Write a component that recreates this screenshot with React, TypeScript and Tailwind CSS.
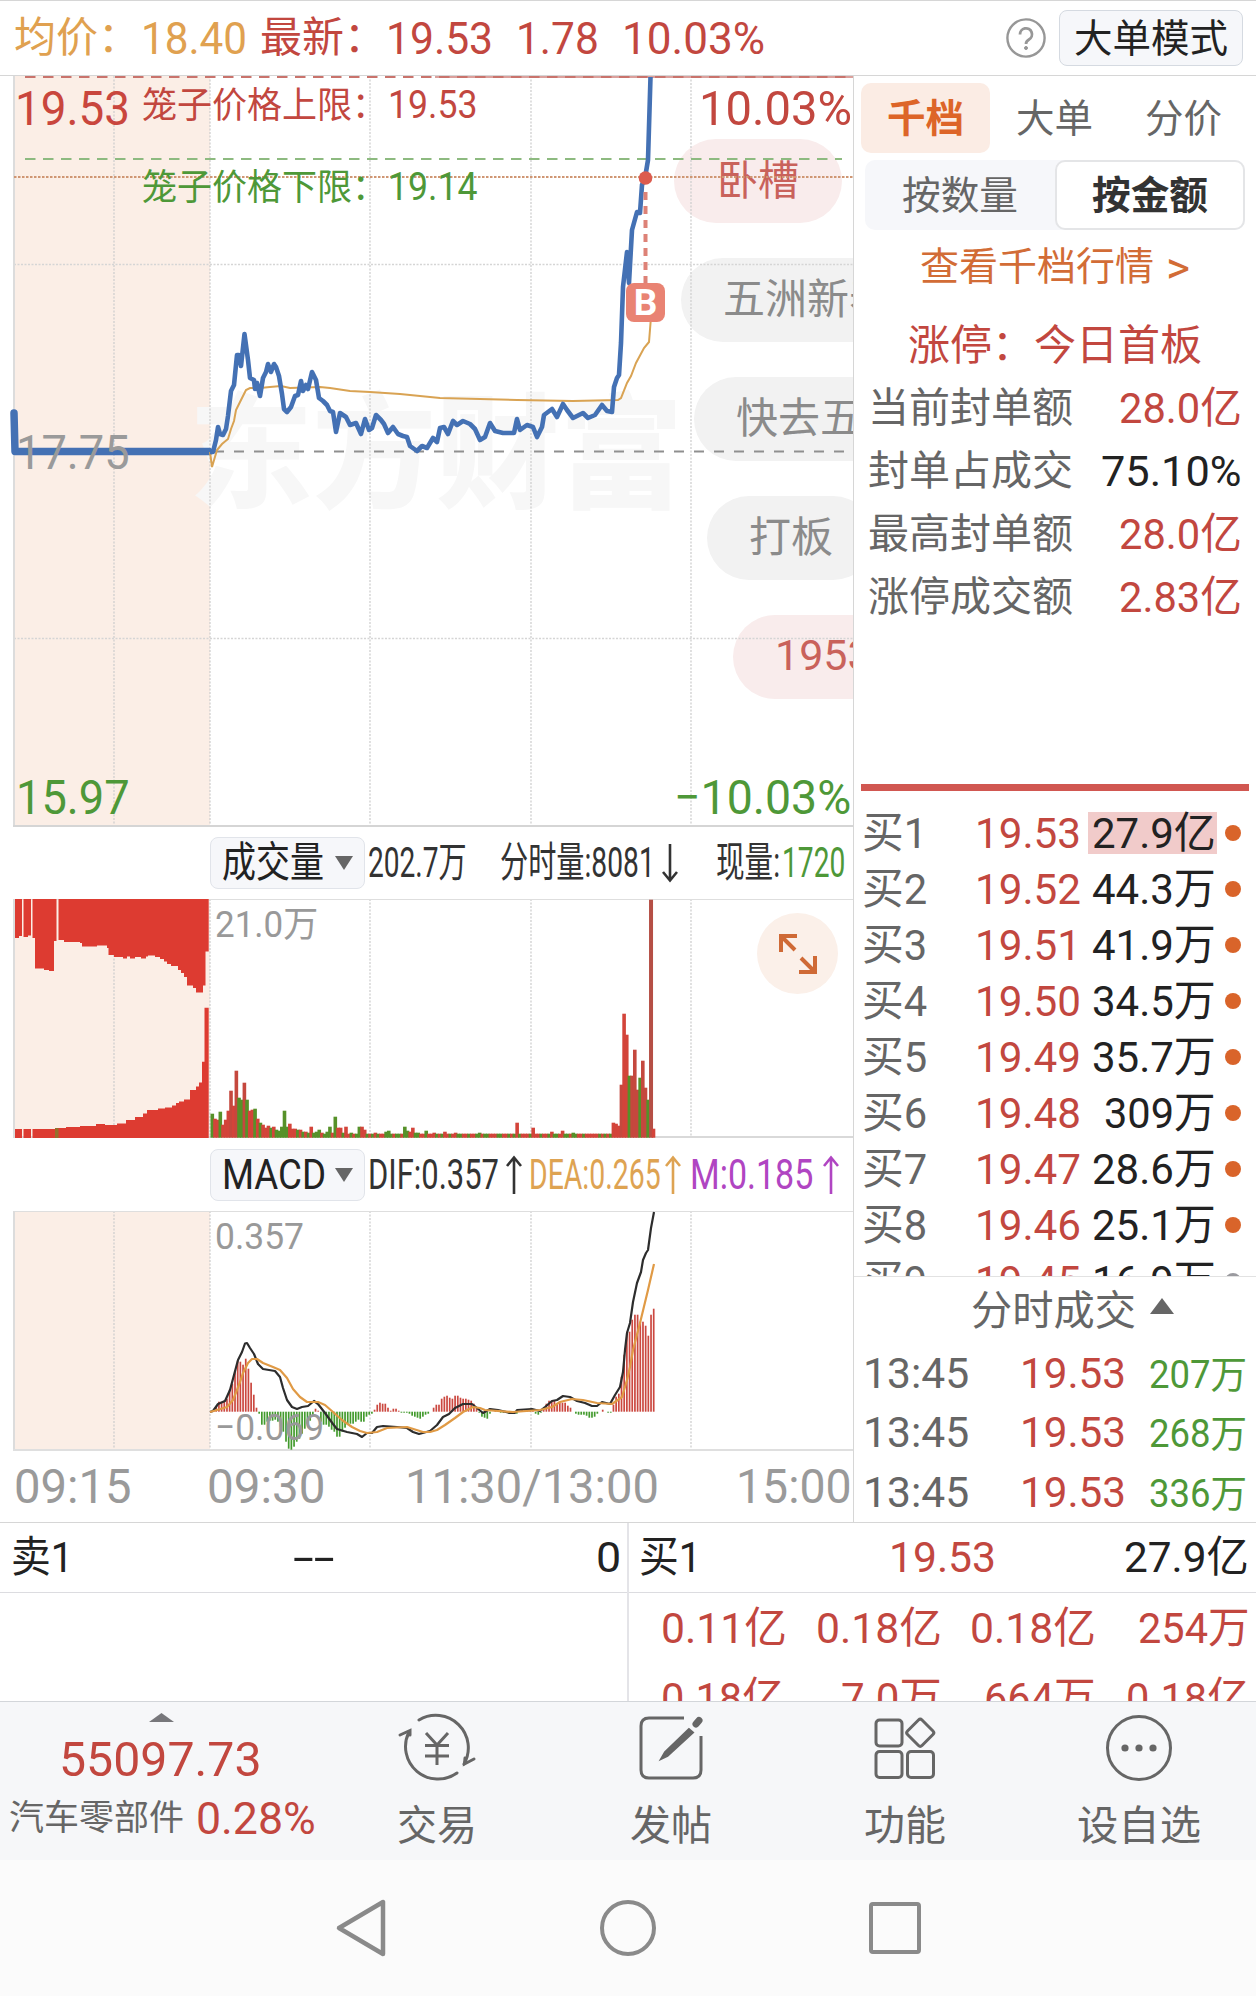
import {useLayoutEffect, useRef} from "react";
import type {ReactNode} from "react";

type FitTextProps = {
    w: number
    className?: string
    children: ReactNode
}

/**
 * Single line of text that is squeezed or stretched to an exact width.
 */
function FitText({w, className = "", children}: FitTextProps) {
    const ref = useRef<HTMLSpanElement>(null);

    useLayoutEffect(() => {
        const el = ref.current;
        if (el) {
            el.style.transform = `scaleX(${w / el.offsetWidth})`;
        }
    }, [w, children]);

    return (
        <span className={`block shrink-0 whitespace-nowrap ${className}`} style={{width: w}}>
            <span ref={ref} className="inline-block origin-left">{children}</span>
        </span>
    );
}

const pricePoints = "210,452 213,452 216,440 218,427 220,434 223,435 226,429 228,416 231,391 234,385 237,355 239,355 241,366 " +
    "244.5,334 248,360 250,378 254,380 255,389 257,383 260,396 263,378 266,372 268,364 271,372 274,364 276,367 279,376 " +
    "282,394 284,409 287,412 291,407 295,396 298,395 301,381 303,391 306,385 308,389 312,372 316,380 319,398 323,401 " +
    "327,405 330,411 333,412 336,432 340,413 346,417 350,425 356,423 361,434 365,419 369,430 372,428 376,415 381,420 " +
    "384,424 388,433 393,427 398,434 403,436 407,437 410,446 417,451 422,446 427,448 433,438 437,442 440,428 444,427 " +
    "448,434 453,421 457,425 463,421 470,424 475,429 480,440 485,437 490,423 495,431 503,433 514,433 517,419 520,430 " +
    "527,425 533,427 537,437 542,427 544,415 552,409 557,417 563,404 567,410 573,418 583,413 588,418 595,415 602,405 " +
    "607,411 612,412 614,387 617,378 619,375 621,343 623,287 627,252 629,283 632,230 637,212 640,213 642,185 645,178 " +
    "648,160 650.5,77";

const avgPoints = "210,452 212,467 217,450 222,444 228,439 231,429 234,421 236,410 240,402 246,390 250,388 260,388 270,387 " +
    "281,386 290,388 320,387 330,388 350,391 370,392 400,394 440,398 517,400 573,401 618,400 621,398 627,383 631,376 " +
    "636,363 644,348 649,342 651,317";

const difPoints = "210,1412 213,1411 218,1404 225,1401 230,1390 234,1375 238,1360 242,1352 245,1343.5 247,1343 250,1348 " +
    "254,1354 258,1364 263,1369 275,1371 280,1377 283,1388 287,1400 292,1407 297,1409 302,1407 308,1406 314,1401 " +
    "318,1404 325,1413 333,1424 337,1429 347,1432 357,1434 362,1437 367,1433 372,1433 377,1427 383,1426 397,1427 " +
    "407,1428 413,1432 419,1434 430,1431 437,1425 443,1417 449,1414 455,1408 463,1404 472,1404 477,1408 483,1413 " +
    "490,1409 498,1410 510,1413 515,1413 517,1410 532,1409 540,1411 545,1407 552,1401 557,1400 563,1396 570,1397 " +
    "577,1401 585,1403 592,1406 597,1406 602,1402 610,1404 615,1395 620,1387 623,1372 625,1350 627,1333 630,1323 " +
    "633,1302 637,1283 641,1272 643,1260 646,1253 648,1250 651,1228 654,1212";

const deaPoints = "210,1412 217,1410 227,1407 233,1400 237,1390 240,1382 243,1373 248,1363 252,1359 257,1359 263,1363 " +
    "273,1367 280,1370 287,1378 293,1389 300,1397 307,1402 318,1402 325,1405 333,1412 342,1420 352,1427 360,1431 " +
    "367,1433 377,1432 387,1428 407,1427 423,1432 430,1432 437,1430 445,1425 455,1418 463,1412 473,1407 480,1408 " +
    "485,1410 513,1412 540,1410 552,1407 560,1402 572,1399 583,1400 597,1403 612,1404 622,1397 627,1380 630,1367 " +
    "633,1350 640,1323 648,1290 654,1264";

// one value per minute since 09:30, negative = green
const volumes = [
    -24, 19, 18, -26, 13, 18, 27, 47, 32, 67, -40, -38, 55, -38, 27, 28, -29, 19, -15, 13, 10, 12, -10, 11, -8, -7, -11, -27, -11, 14,
    9, 9, -8, 8, -6, 6, -5, 11, -5, -6, -8, 5, -4, -6, -11, 5, -21, 10, 10, -5, 11, 4, -5, 4, -4, -11, 11, 8, -4, 4,
    -4, 5, -4, 4, 4, -6, -7, -4, 4, -4, -4, 4, -11, -7, 6, 10, -5, -5, 4, 4, -7, 4, 4, 5, -4, 4, -4, 6, 4, -4,
    4, 5, -4, -4, 4, 4, -4, 4, 4, -4, -5, 4, -4, -4, 4, 4, 4, -4, -4, 4, 4, -4, 4, -4, 15, -4, 4, 4, 4, -4,
    10, 4, 4, -4, 4, 4, -4, 6, -4, -4, 4, 7, -4, -4, 4, -5, -4, 4, 4, -4, 4, 4, 4, 4, 4, -4, 4, -4, 4, -4,
    15, 14, 12, 53, 124, 103, -62, 62, 88, 48, -60, 77, 50, -38, 238, 9,
];

const macd = [
    0, 1, 5, 10, 10, 11, 13, 22, 28, 40, 51, 50, 47, 53, 43, 29, 17, 4, -2, -13, -13, -10, -9, -9, -8, -10, -15, -20, -30, -37, -38,
    -35, -30, -27, -22, -17, -12, -9, -4, 3, 1, -10, -13, -13, -15, -18, -20, -25, -25, -20, -16, -13, -12, -12, -10, -8, -10,
    -10, -5, -3, -2, 2, 7, 9, 8, 8, 4, 1, 3, 3, 1, -1, -1, -1, -2, -4, -5, -6, -7, -5, -3, -2, 0, 4, 7, 7, 13, 15, 16, 14, 13, 16, 16,
    14, 13, 13, 12, 11, 8, 3, -1, -5, -6, -7, -2, 0, 1, 1, -1, -1, -1, -2, -2, -2, -2, 0, 2, 1, 2, 2, 1, -2, -3, -1, 3, 8, 11, 11, 11,
    8, 9, 9, 9, 6, 4, 0, -2, -3, -3, -3, -4, -6, -6, -5, -2, 0, 2, 0, -1, -1, 7, 15, 18, 35, 57, 80, 80, 92, 97, 97, 90, 90, 86, 76,
    97, 103,
];

const gridX = [114, 210, 370, 531, 691];

const bids = [
    {name: "买1", price: "19.53", amount: "27.9亿", w: 124},
    {name: "买2", price: "19.52", amount: "44.3万", w: 124},
    {name: "买3", price: "19.51", amount: "41.9万", w: 124},
    {name: "买4", price: "19.50", amount: "34.5万", w: 124},
    {name: "买5", price: "19.49", amount: "35.7万", w: 124},
    {name: "买6", price: "19.48", amount: "309万", w: 112},
    {name: "买7", price: "19.47", amount: "28.6万", w: 124},
    {name: "买8", price: "19.46", amount: "25.1万", w: 124},
    {name: "买9", price: "19.45", amount: "16.9万", w: 124},
];

const sealRows = [
    {name: "当前封单额", value: "28.0亿", w: 123, red: true},
    {name: "封单占成交", value: "75.10%", w: 141, red: false},
    {name: "最高封单额", value: "28.0亿", w: 123, red: true},
    {name: "涨停成交额", value: "2.83亿", w: 123, red: true},
];

const bubbles = [
    {text: "卧槽", className: "left-[674px] top-[63px] w-[168px] bg-[#f9ecec] pl-[43px] text-[41px] text-[#c9625b]"},
    {text: "五洲新春", className: "left-[681px] top-[182px] w-[254px] bg-[#f2f2f2] pl-[42px] text-[42px] text-[#8b8b8b]"},
    {text: "快去五洲", className: "left-[694px] top-[301px] w-[254px] bg-[#f2f2f2] pl-[42px] text-[42px] text-[#8b8b8b]"},
    {text: "打板", className: "left-[707px] top-[420px] w-[168px] bg-[#f2f2f2] pl-[42px] text-[42px] text-[#8b8b8b]"},
    {text: "1953", className: "left-[733px] top-[539px] w-[180px] bg-[#f9ecec] pb-[4px] pl-[42px] text-[43px] text-[#c9625b]"},
];

function Grid({top, bottom}: { top: number, bottom: number }) {
    return (
        <>
            {gridX.map((x) => (
                <line key={x} x1={x} x2={x} y1={top} y2={bottom} stroke="#cfcfcf" strokeWidth="1.3" strokeDasharray="2 1.5"/>
            ))}
        </>
    );
}

function Header() {
    return (
        <div className="flex h-[76px] shrink-0 items-center border-t border-b border-[#d6d6d6] text-[45px] text-[#c2473f]">
            <FitText w={126} className="ml-[14px] text-[42px] text-[#e0a150]">均价：</FitText>
            <FitText w={106} className="ml-px text-[#e0a150]">18.40</FitText>
            <FitText w={126} className="ml-[13px] text-[42px]">最新：</FitText>
            <FitText w={107}>19.53</FitText>
            <FitText w={83} className="ml-[23px]">1.78</FitText>
            <FitText w={143} className="ml-[23px]">10.03%</FitText>
            <svg className="ml-[240px] shrink-0" width="42" height="42" viewBox="0 0 42 42" fill="none" stroke="#979797">
                <circle cx="21" cy="21" r="18.6" strokeWidth="2.4"/>
                <path d="M15 17.5a6 6 0 1 1 9 5c-2 1.200-3 2.200-3 4.500" strokeWidth="2.800"/>
                <circle cx="21" cy="31" r="1.500" fill="#979797" strokeWidth="1"/>
            </svg>
            <div className="ml-[12px] flex h-[56px] w-[184px] items-center rounded-lg border border-[#d5dae1] bg-[#f6f7fa] pt-[3px] pl-[14px] text-[39px] text-[#222]">
                <FitText w={154}>大单模式</FitText>
            </div>
        </div>
    );
}

function PriceChart() {
    return (
        <div className="relative h-[751px] overflow-hidden">
            <div className="absolute top-0 left-[14px] h-[749px] w-[196px] bg-[#fbeee6]"/>
            <FitText w={494} className="absolute top-[305px] left-[189px] text-[124px] leading-[150px] font-black text-[#f7f7f7]">东方财富</FitText>
            {bubbles.map((b) => (
                <div key={b.text} className={`absolute flex h-[84px] items-center rounded-full whitespace-nowrap ${b.className}`}>
                    {b.text}
                </div>
            ))}
            <svg className="absolute inset-0" width="853" height="751" viewBox="0 76 853 751" fill="none">
                <Grid top={76} bottom={825}/>
                <path d="M14 264.500H853M14 638.500H853" stroke="#d5d5d5" strokeWidth="1.300" strokeDasharray="2 1.500"/>
                <path d="M14 76V826" stroke="#dcdcdc" strokeWidth="2"/>
                <path d="M13 826H853" stroke="#d5d5d5" strokeWidth="2"/>
                <path d="M435 77H853" stroke="#dba09c" strokeWidth="2"/>
                <path d="M25 77H853" stroke="#c9736c" strokeWidth="2" strokeDasharray="10.500 7.500"/>
                <path d="M25 159H842" stroke="#8dba80" strokeWidth="2" strokeDasharray="10.500 7.500"/>
                <path d="M14 177H853" stroke="#cf9673" strokeWidth="2" strokeDasharray="2.500 1.500"/>
                <path d="M214 451.500H853" stroke="#8f8f8f" strokeWidth="2" strokeDasharray="10 10"/>
                <polyline points="14,413 15,451.500 209,451.500" stroke="#4471b4" strokeWidth="7.500" strokeLinecap="round" strokeLinejoin="round"/>
                <polyline points={avgPoints} stroke="#d9a353" strokeWidth="2"/>
                <polyline points={pricePoints} stroke="#4471b4" strokeWidth="4.600" strokeLinejoin="round"/>
                <path d="M645.500 192V283" stroke="#dd8277" strokeWidth="4" strokeDasharray="8 6"/>
                <circle cx="645.500" cy="178" r="6.800" fill="#dc5b4e"/>
            </svg>
            <div className="absolute top-[207px] left-[626px] flex size-[39px] items-center justify-center rounded-lg bg-[#e98373] text-[37px] leading-none font-bold text-white">
                B
            </div>
            <FitText w={115} className="absolute top-[3px] left-[15px] text-[49px] leading-[60px] text-[#c9463d]">19.53</FitText>
            <FitText w={245} className="absolute top-[6px] left-[142px] text-[36px] leading-[48px] text-[#c2473f]">笼子价格上限：</FitText>
            <FitText w={89} className="absolute top-[5px] left-[388px] text-[38px] leading-[48px] text-[#c2473f]">19.53</FitText>
            <FitText w={245} className="absolute top-[88px] left-[142px] text-[36px] leading-[48px] text-[#4e9838]">笼子价格下限：</FitText>
            <FitText w={89} className="absolute top-[87px] left-[388px] text-[38px] leading-[48px] text-[#4e9838]">19.14</FitText>
            <FitText w={153} className="absolute top-[3px] left-[699px] text-[49px] leading-[60px] text-[#c2473f]">10.03%</FitText>
            <FitText w={114} className="absolute top-[347px] left-[16px] text-[48px] leading-[60px] text-[#9a9a9a]">17.75</FitText>
            <FitText w={114} className="absolute top-[692px] left-[16px] text-[48px] leading-[60px] text-[#4e9838]">15.97</FitText>
            <FitText w={177} className="absolute top-[692px] left-[674px] text-[48px] leading-[60px] text-[#4e9838]">−10.03%</FitText>
        </div>
    );
}

function Selector({name, w}: { name: string, w: number }) {
    return (
        <div className="ml-[210px] flex h-[52px] w-[155px] shrink-0 items-center rounded-lg border border-[#e1e4ea] bg-[#f6f7fa] pl-[11px] text-[#222]">
            <FitText w={w}>{name}</FitText>
            <svg className="mr-[11px] ml-auto" width="18" height="14"><path d="M0 0H18L9 14Z" fill="#666"/></svg>
        </div>
    );
}

function Arrow({className, down}: { className: string, down?: boolean }) {
    return (
        <svg className={`shrink-0 ${className}`} width="18" height="40" viewBox="0 0 18 40" fill="none" stroke="currentColor" strokeWidth="2.600">
            {down ? <path d="M9 1V37M2 29L9 37.500L16 29"/> : <path d="M9 39V3M2 11L9 2.500L16 11"/>}
        </svg>
    );
}

function VolumeChart() {
    return (
        <div className="relative h-[239px] overflow-hidden">
            <svg width="853" height="239" viewBox="0 899 853 239">
                <rect x="14" y="899" width="196" height="239" fill="#fbeee6"/>
                <Grid top={899} bottom={1138}/>
                <path d="M13 899.500H853" stroke="#dedede"/>
                <path d="M13 1137H853" stroke="#d9d9d9" strokeWidth="2"/>
                <path d="M14 899V1138" stroke="#dcdcdc" strokeWidth="2"/>
                <path fill="#dd3b31" d="M15 899V938H19V936H22V899ZM23.500 899V937H28V935.500H31V899ZM32.500 899V938H35V968.500H44V970H49V971H54V941H56.500V899ZM58.500 899V940H64V942H80V943H82V946.500H97V945.500H107V948H108.500V955H114V957H123V958.500H127V956.500H130V958.500H135V957H141V958.500H146V956.500H148V955.500H155V957H160V959H164V961.500H167V964H171V966H178V970H181V973H184V977H187V985.500H193V988H196V992.500H203V985.500H205.500V951.500H208.700V899Z"/>
                <path fill="#dd3b31" d="M15 1138V1129H22V1138ZM23.500 1138V1129H31V1138ZM32.500 1138V1129H55V1128H66V1127H80V1126H96V1124H105V1125H117V1123.500H126V1120H135V1117H143V1113.500H147V1110H158V1108.500H165V1107.500H172V1105.500H176V1103H179V1101.500H184V1099.500H190V1090H196V1086.500H199V1082.500H202V1061.700H204.500V1007.700H208.700V1138Z"/>
                <rect x="55" y="1128" width="3.500" height="10" fill="#94702c"/>
                {volumes.map((v, i) => (
                    <rect
                        key={i}
                        x={210.500 + i * 2.674}
                        y={1137.700 - Math.abs(v)}
                        width={i === 164 ? 4 : 3.600}
                        height={Math.abs(v)}
                        fill={v < 0 ? "#569129" : i === 164 ? "#b54f45" : i > 6 && v > 40 && v < 100 ? "#c5483e" : "#d3443a"}
                    />
                ))}
            </svg>
            <FitText w={103} className="absolute top-[2px] left-[215px] text-[36px] leading-[48px] text-[#999]">21.0万</FitText>
            <div className="absolute top-[14px] left-[757px] flex size-[81px] items-center justify-center rounded-full bg-[#fbf0e9]">
                <svg width="42" height="42" viewBox="0 0 42 42" fill="none" stroke="#cf6a36" strokeWidth="4">
                    <path d="M20 3H4V19M4.500 3.500L18 17M22 39H38V23M37.500 38.500L24 25"/>
                </svg>
            </div>
        </div>
    );
}

function MacdChart() {
    return (
        <div className="relative h-[240px] overflow-hidden">
            <svg width="853" height="240" viewBox="0 1211 853 240" fill="none">
                <rect x="14" y="1211" width="196" height="239" fill="#fbeee6"/>
                <Grid top={1211} bottom={1450}/>
                <path d="M13 1211.500H853" stroke="#dedede"/>
                <path d="M14 1211V1451" stroke="#dcdcdc" strokeWidth="2"/>
                <path d="M13 1450H853" stroke="#dfdfdf" strokeWidth="2"/>
                {macd.map((v, i) => (
                    <rect
                        key={i}
                        x={210 + i * 2.684}
                        y={v < 0 ? 1411.700 : 1411.700 - v}
                        width="1.700"
                        height={Math.abs(v)}
                        fill={v < 0 ? "#439b2e" : "#cb4840"}
                    />
                ))}
            </svg>
            <FitText w={89} className="absolute top-[2px] left-[215px] text-[37px] leading-[48px] text-[#999]">0.357</FitText>
            <FitText w={109} className="absolute top-[193px] left-[215px] text-[37px] leading-[48px] text-[#999]">−0.069</FitText>
            <svg className="absolute inset-0" width="853" height="240" viewBox="0 1211 853 240" fill="none" strokeWidth="2.200" strokeLinejoin="round">
                <polyline points={difPoints} stroke="#2d2d2d"/>
                <polyline points={deaPoints} stroke="#e09a45"/>
            </svg>
        </div>
    );
}

function SidePanel() {
    return (
        <div className="flex w-[402px] flex-col text-[41px] text-[#666]">
            <div className="mt-[7px] flex h-[70px] items-center text-[39px]">
                <div className="ml-[7px] flex h-full w-[129px] items-center justify-center rounded-[10px] bg-[#fbece4] pt-[4px] font-bold text-[#dd6528]">
                    <FitText w={77}>千档</FitText>
                </div>
                <FitText w={77} className="ml-[26px] pt-[4px]">大单</FitText>
                <FitText w={77} className="ml-[52px] pt-[4px]">分价</FitText>
            </div>
            <div className="mt-[7px] ml-[11px] flex h-[70px] w-[380px] items-center rounded-[10px] bg-[#f6f7fa] text-[39px]">
                <FitText w={116} className="ml-[37px] pt-[4px]">按数量</FitText>
                <div className="ml-auto flex h-full w-[190px] items-center justify-center rounded-[10px] border-2 border-[#e4e5e7] bg-white pt-[4px] font-bold text-[#333]">
                    <FitText w={116}>按金额</FitText>
                </div>
            </div>
            <div className="mt-[11px] ml-[66px] flex h-[54px] items-center text-[39px] text-[#d26c36]">
                <FitText w={234}>查看千档行情</FitText>
                <FitText w={24} className="ml-[12px] text-[44px]">&gt;</FitText>
            </div>
            <div className="mt-[21px] ml-[54px] flex h-[60px] items-center text-[#c2473f]">
                <FitText w={294} className="text-[42px]">涨停：今日首板</FitText>
            </div>
            <div className="mt-[2px] flex h-[252px] flex-col">
                {sealRows.map((r) => (
                    <div key={r.name} className="flex h-[63px] items-center justify-between pr-[14px] pl-[14px]">
                        <FitText w={205}>{r.name}</FitText>
                        <FitText w={r.w} className={`text-[43px] ${r.red ? "text-[#c2473f]" : "text-[#222]"}`}>{r.value}</FitText>
                    </div>
                ))}
            </div>
            <div className="mt-[155px] ml-[7px] h-[7px] w-[388px] shrink-0 bg-[#d15751]"/>
            <div className="h-[485px] shrink-0 overflow-hidden pt-[14px] text-[43px]">
                {bids.map((b, i) => (
                    <div key={b.name} className="flex h-[56px] items-center pl-[8px]">
                        <FitText w={65}>{b.name}</FitText>
                        <FitText w={106} className="ml-[48px] text-[#c2473f]">{b.price}</FitText>
                        <div className={`ml-[7px] flex h-[42px] w-[129px] items-center justify-end pr-px text-[#222] ${i === 0 ? "bg-[#f1cbca]" : ""}`}>
                            <FitText w={b.w}>{b.amount}</FitText>
                        </div>
                        <div className={`ml-[8px] size-[16px] rounded-full ${i === 8 ? "bg-[#9a9a9f]" : "bg-[#d9642a]"}`}/>
                    </div>
                ))}
            </div>
            <div className="flex h-[67px] shrink-0 items-center border-t border-[#e2e2e2] pl-[117px]">
                <FitText w={165} className="pt-[2px]">分时成交</FitText>
                <svg className="mb-[9px] ml-[14px]" width="24" height="16"><path d="M12 0L24 16H0Z" fill="#666"/></svg>
            </div>
            <div className="flex flex-col">
                {["207万", "268万", "336万"].map((v) => (
                    <div key={v} className="flex h-[59.5px] items-center pl-[9px] text-[43px]">
                        <FitText w={106}>13:45</FitText>
                        <FitText w={106} className="ml-[51px] text-[#c2473f]">19.53</FitText>
                        <FitText w={98} className="mt-[3px] ml-[23px] text-[38px] text-[#4e9838]">{v}</FitText>
                    </div>
                ))}
            </div>
        </div>
    );
}

function BidAskBar() {
    return (
        <div className="flex h-[179px] shrink-0 overflow-hidden border-t border-[#d6d6d6] text-[43px] text-[#222]">
            <div className="w-[629px] border-r-2 border-[#e4e4e8]">
                <div className="flex h-[70px] items-center border-b border-[#dcdce0] pl-[11px]">
                    <FitText w={62}>卖1</FitText>
                    <FitText w={42} className="ml-[220px]">--</FitText>
                    <FitText w={25} className="ml-[261px]">0</FitText>
                </div>
            </div>
            <div className="flex-1">
                <div className="flex h-[70px] items-center border-b border-[#dcdce0] pl-[10px]">
                    <FitText w={62}>买1</FitText>
                    <FitText w={107} className="ml-[188px] text-[#c2473f]">19.53</FitText>
                    <FitText w={125} className="ml-[128px]">27.9亿</FitText>
                </div>
                <div className="flex h-[70px] items-center pl-[32px] text-[#c2473f]">
                    <FitText w={126}>0.11亿</FitText>
                    <FitText w={126} className="ml-[29px]">0.18亿</FitText>
                    <FitText w={126} className="ml-[28px]">0.18亿</FitText>
                    <FitText w={112} className="ml-[42px]">254万</FitText>
                </div>
                <div className="flex h-[70px] items-center pl-[32px] text-[#c2473f]">
                    <FitText w={123}>0.18亿</FitText>
                    <FitText w={101} className="ml-[57px]">7.0万</FitText>
                    <FitText w={112} className="ml-[42px]">664万</FitText>
                    <FitText w={123} className="ml-[30px]">0.18亿</FitText>
                </div>
            </div>
        </div>
    );
}

function TabBar() {
    return (
        <div className="flex h-[159px] shrink-0 border-t border-[#d3d6da] bg-[#f6f7f9] text-[41px] text-[#666]">
            <div className="flex w-[320px] flex-col">
                <svg className="mt-[11px] ml-[149px]" width="25" height="9"><path d="M12.500 0L25 9H0Z" fill="#77777b"/></svg>
                <FitText w={203} className="mt-[8px] ml-[59px] text-[48px] leading-[60px] text-[#c2473f]">55097.73</FitText>
                <div className="flex h-[56px] items-center pl-[9px]">
                    <FitText w={175} className="text-[35px]">汽车零部件</FitText>
                    <FitText w={120} className="ml-[12px] text-[45px] text-[#c2473f]">0.28%</FitText>
                </div>
            </div>
            <div className="flex w-[234px] flex-col items-center">
                <svg className="mt-[8px]" width="80" height="76" viewBox="0 0 80 76" fill="none" stroke="#666" strokeWidth="3" strokeLinecap="round">
                    <path d="M22 10A32.500 32.500 0 0 1 67 54M60 63A32.500 32.500 0 0 1 12 22"/>
                    <path d="M3 25L13 20.500L13 25M77 49L67.500 54L68 48"/>
                    <path d="M29 23L40 35L51 23M28 35.500H52M28 46H52M40 35V55" strokeLinecap="butt"/>
                </svg>
                <FitText w={80} className="mt-[20px]">交易</FitText>
            </div>
            <div className="flex w-[234px] flex-col items-center">
                <svg className="mt-[8px]" width="80" height="76" viewBox="0 0 80 76" fill="none" stroke="#666" strokeWidth="3">
                    <path d="M53 8H18Q10 8 10 16V60Q10 68 18 68H62Q70 68 70 60V26"/>
                    <path d="M58 19L34 42L30 49L36.500 46L62 22.500Z" fill="#666" strokeWidth="2"/>
                    <path d="M65 14L68 10.500" strokeWidth="7" strokeLinecap="round"/>
                </svg>
                <FitText w={82} className="mt-[20px]">发帖</FitText>
            </div>
            <div className="flex w-[234px] flex-col items-center">
                <svg className="mt-[8px]" width="80" height="76" viewBox="0 0 80 76" fill="none" stroke="#666" strokeWidth="3">
                    <rect x="11" y="10" width="26" height="26" rx="3.500"/>
                    <rect x="11" y="41.500" width="26" height="26" rx="3.500"/>
                    <rect x="42.500" y="41.500" width="26" height="26" rx="3.500"/>
                    <rect x="45" y="12.500" width="20.500" height="20.500" rx="2.500" transform="rotate(45 55.250 22.750)"/>
                </svg>
                <FitText w={82} className="mt-[20px]">功能</FitText>
            </div>
            <div className="flex w-[234px] flex-col items-center">
                <svg className="mt-[8px]" width="80" height="76" viewBox="0 0 80 76" fill="none" stroke="#666" strokeWidth="3">
                    <circle cx="40" cy="38" r="31.500"/>
                    <g fill="#666" stroke="none">
                        <circle cx="26" cy="38" r="3.600"/>
                        <circle cx="40" cy="38" r="3.600"/>
                        <circle cx="54" cy="38" r="3.600"/>
                    </g>
                </svg>
                <FitText w={124} className="mt-[20px]">设自选</FitText>
            </div>
        </div>
    );
}

export default function App() {
    return (
        <div className="flex h-[1996px] w-[1256px] flex-col overflow-hidden bg-white font-[Roboto,'Noto_Sans_CJK_SC',sans-serif] leading-none">
            <Header/>
            <div className="flex h-[1446px] shrink-0">
                <div className="w-[854px] border-r border-[#d6d6d6]">
                    <PriceChart/>
                    <div className="flex h-[72px] items-center text-[42px] text-[#333]">
                        <Selector name="成交量" w={102}/>
                        <FitText w={99} className="ml-[3px]">202.7万</FitText>
                        <FitText w={155} className="ml-[33px]">分时量:8081</FitText>
                        <Arrow down className="ml-[6px]"/>
                        <FitText w={64} className="ml-[37px]">现量:</FitText>
                        <FitText w={63} className="ml-[2px] text-[#4e9838]">1720</FitText>
                    </div>
                    <VolumeChart/>
                    <div className="flex h-[73px] items-center text-[42px] text-[#333]">
                        <Selector name="MACD" w={104}/>
                        <FitText w={131} className="ml-[3px]">DIF:0.357</FitText>
                        <Arrow className="ml-[6px]"/>
                        <FitText w={132} className="ml-[6px] text-[#dea352]">DEA:0.265</FitText>
                        <Arrow className="ml-[3px] text-[#dea352]"/>
                        <FitText w={123} className="ml-[8px] text-[#b045c2]">M:0.185</FitText>
                        <Arrow className="ml-[9px] text-[#b045c2]"/>
                    </div>
                    <MacdChart/>
                    <div className="flex h-[70px] items-center pt-[2px] text-[48px] text-[#9a9a9a]">
                        <FitText w={118} className="ml-[14px]">09:15</FitText>
                        <FitText w={119} className="ml-[75px]">09:30</FitText>
                        <FitText w={254} className="ml-[79px]">11:30/13:00</FitText>
                        <FitText w={116} className="ml-[77px]">15:00</FitText>
                    </div>
                </div>
                <SidePanel/>
            </div>
            <BidAskBar/>
            <TabBar/>
            <div className="flex h-[136px] shrink-0 items-center bg-[#fbfbfb]">
                <svg className="ml-[331px]" width="56" height="64" fill="none" stroke="#8a8a8a" strokeWidth="4.500" strokeLinejoin="round">
                    <path d="M52 6V58L8 32Z"/>
                </svg>
                <div className="ml-[213px] size-[56px] rounded-full border-[4.5px] border-[#8a8a8a]"/>
                <div className="ml-[213px] size-[52px] rounded-sm border-[4.5px] border-[#8a8a8a]"/>
            </div>
        </div>
    );
}
